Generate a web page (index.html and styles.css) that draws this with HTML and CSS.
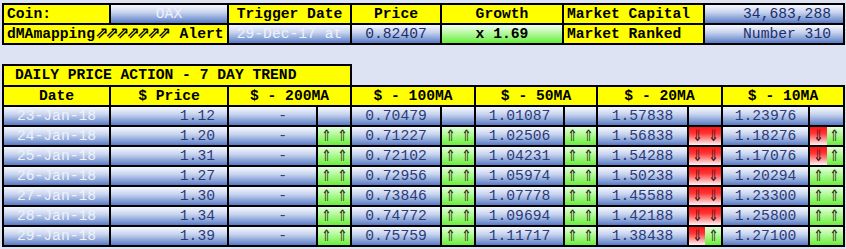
FILE: index.html
```html
<!DOCTYPE html>
<html>
<head>
<meta charset="utf-8">
<title>dMAmapping Alert</title>
<link rel="stylesheet" href="styles.css">
</head>
<body>
<div class="page">
  <div class="grid top">
    <div class="c y b l">Coin:</div>
    <div class="c blue w">OAX</div>
    <div class="c y b">Trigger Date</div>
    <div class="c y b">Price</div>
    <div class="c y b">Growth</div>
    <div class="c y b l">Market Capital</div>
    <div class="c blue n r">34,683,288</div>
    <div class="c y b l s2">dMAmapping<span class="ne">⇗⇗⇗⇗⇗⇗⇗</span> Alert</div>
    <div class="c blue w">29-Dec-17 at</div>
    <div class="c blue n">0.82407</div>
    <div class="c green b">x 1.69</div>
    <div class="c y b l">Market Ranked</div>
    <div class="c blue n r">Number 310</div>
  </div>

  <div class="title">DAILY PRICE ACTION - 7 DAY TREND</div>

  <div class="grid trend">
    <div class="c y b">Date</div>
    <div class="c y b">$ Price</div>
    <div class="c y b s2">$ - 200MA</div>
    <div class="c y b s2">$ - 100MA</div>
    <div class="c y b s2">$ - 50MA</div>
    <div class="c y b s2">$ - 20MA</div>
    <div class="c y b s2">$ - 10MA</div>

    <div class="c blue w">23-Jan-18</div>
    <div class="c blue v r">1.12</div>
    <div class="c blue v dash">-</div>
    <div class="c blue"></div>
    <div class="c blue v">0.70479</div>
    <div class="c blue"></div>
    <div class="c blue v">1.01087</div>
    <div class="c blue"></div>
    <div class="c blue v">1.57838</div>
    <div class="c blue"></div>
    <div class="c blue v">1.23976</div>
    <div class="c blue"></div>

    <div class="c blue w">24-Jan-18</div>
    <div class="c blue v r">1.20</div>
    <div class="c blue v dash">-</div>
    <div class="sig"><span class="up"><i>⇑</i></span><span class="up"><i>⇑</i></span></div>
    <div class="c blue v">0.71227</div>
    <div class="sig"><span class="up"><i>⇑</i></span><span class="up"><i>⇑</i></span></div>
    <div class="c blue v">1.02506</div>
    <div class="sig"><span class="up"><i>⇑</i></span><span class="up"><i>⇑</i></span></div>
    <div class="c blue v">1.56838</div>
    <div class="sig"><span class="dn"><i>⇓</i></span><span class="dn"><i>⇓</i></span></div>
    <div class="c blue v">1.18276</div>
    <div class="sig"><span class="dn"><i>⇓</i></span><span class="up"><i>⇑</i></span></div>

    <div class="c blue w">25-Jan-18</div>
    <div class="c blue v r">1.31</div>
    <div class="c blue v dash">-</div>
    <div class="sig"><span class="up"><i>⇑</i></span><span class="up"><i>⇑</i></span></div>
    <div class="c blue v">0.72102</div>
    <div class="sig"><span class="up"><i>⇑</i></span><span class="up"><i>⇑</i></span></div>
    <div class="c blue v">1.04231</div>
    <div class="sig"><span class="up"><i>⇑</i></span><span class="up"><i>⇑</i></span></div>
    <div class="c blue v">1.54288</div>
    <div class="sig"><span class="dn"><i>⇓</i></span><span class="dn"><i>⇓</i></span></div>
    <div class="c blue v">1.17076</div>
    <div class="sig"><span class="dn"><i>⇓</i></span><span class="up"><i>⇑</i></span></div>

    <div class="c blue w">26-Jan-18</div>
    <div class="c blue v r">1.27</div>
    <div class="c blue v dash">-</div>
    <div class="sig"><span class="up"><i>⇑</i></span><span class="up"><i>⇑</i></span></div>
    <div class="c blue v">0.72956</div>
    <div class="sig"><span class="up"><i>⇑</i></span><span class="up"><i>⇑</i></span></div>
    <div class="c blue v">1.05974</div>
    <div class="sig"><span class="up"><i>⇑</i></span><span class="up"><i>⇑</i></span></div>
    <div class="c blue v">1.50238</div>
    <div class="sig"><span class="dn"><i>⇓</i></span><span class="dn"><i>⇓</i></span></div>
    <div class="c blue v">1.20294</div>
    <div class="sig"><span class="up"><i>⇑</i></span><span class="up"><i>⇑</i></span></div>

    <div class="c blue w">27-Jan-18</div>
    <div class="c blue v r">1.30</div>
    <div class="c blue v dash">-</div>
    <div class="sig"><span class="up"><i>⇑</i></span><span class="up"><i>⇑</i></span></div>
    <div class="c blue v">0.73846</div>
    <div class="sig"><span class="up"><i>⇑</i></span><span class="up"><i>⇑</i></span></div>
    <div class="c blue v">1.07778</div>
    <div class="sig"><span class="up"><i>⇑</i></span><span class="up"><i>⇑</i></span></div>
    <div class="c blue v">1.45588</div>
    <div class="sig"><span class="dn"><i>⇓</i></span><span class="dn"><i>⇓</i></span></div>
    <div class="c blue v">1.23300</div>
    <div class="sig"><span class="up"><i>⇑</i></span><span class="up"><i>⇑</i></span></div>

    <div class="c blue w">28-Jan-18</div>
    <div class="c blue v r">1.34</div>
    <div class="c blue v dash">-</div>
    <div class="sig"><span class="up"><i>⇑</i></span><span class="up"><i>⇑</i></span></div>
    <div class="c blue v">0.74772</div>
    <div class="sig"><span class="up"><i>⇑</i></span><span class="up"><i>⇑</i></span></div>
    <div class="c blue v">1.09694</div>
    <div class="sig"><span class="up"><i>⇑</i></span><span class="up"><i>⇑</i></span></div>
    <div class="c blue v">1.42188</div>
    <div class="sig"><span class="dn"><i>⇓</i></span><span class="dn"><i>⇓</i></span></div>
    <div class="c blue v">1.25800</div>
    <div class="sig"><span class="up"><i>⇑</i></span><span class="up"><i>⇑</i></span></div>

    <div class="c blue w">29-Jan-18</div>
    <div class="c blue v r">1.39</div>
    <div class="c blue v dash">-</div>
    <div class="sig"><span class="up"><i>⇑</i></span><span class="up"><i>⇑</i></span></div>
    <div class="c blue v">0.75759</div>
    <div class="sig"><span class="up"><i>⇑</i></span><span class="up"><i>⇑</i></span></div>
    <div class="c blue v">1.11717</div>
    <div class="sig"><span class="up"><i>⇑</i></span><span class="up"><i>⇑</i></span></div>
    <div class="c blue v">1.38438</div>
    <div class="sig"><span class="dn"><i>⇓</i></span><span class="up"><i>⇑</i></span></div>
    <div class="c blue v">1.27100</div>
    <div class="sig"><span class="up"><i>⇑</i></span><span class="up"><i>⇑</i></span></div>
  </div>
</div>
</body>
</html>
```

FILE: styles.css
```css
html, body {
  margin: 0;
  padding: 0;
  background: #dde3f3;
}

.page {
  padding: 3px 1px 0 2px;
  font-family: "Liberation Mono", "Courier New", monospace;
  font-size: 14.67px;
  color: #000;
}

.grid {
  display: grid;
  box-sizing: border-box;
  width: 843px;
  padding: 2px;
  gap: 2px;
  background: #000;
  grid-auto-rows: 18px;
}

.top {
  grid-template-columns: 105px 116px 121px 88px 120px 139px 138px;
}

.trend {
  grid-template-columns: 105px 116px 87px 32px 88px 32px 87px 31px 89px 32px 85px 33px;
}

.title {
  box-sizing: border-box;
  width: 350px;
  height: 21px;
  margin-top: 19px;
  padding-left: 11px;
  border: 2px solid #000;
  border-bottom: 0;
  background: #ffff00;
  font-weight: bold;
  line-height: 19px;
  white-space: nowrap;
}

.c {
  line-height: 18px;
  text-align: center;
  white-space: nowrap;
}

.s2 { grid-column: span 2; }

.y { background: #ffff00; }
.b { font-weight: bold; }
.l { text-align: left; padding-left: 3px; }
.r { text-align: right; padding-right: 12px; }

.blue {
  background: linear-gradient(to bottom, #f6f8fe 0%, #c9d5ef 40%, #5a7cc6 100%);
}
.green {
  background: linear-gradient(to bottom, #f2fff0 0%, #b6f8a0 45%, #66ee3a 100%);
}

.w { color: #eef2fb; }
.n { color: #1c2d6b; }
.v { color: #2a3b78; }
.dash { text-align: right; padding-right: 29px; }

.ne {
  font-family: "DejaVu Sans", sans-serif;
  font-size: 16px;
  font-weight: bold;
  letter-spacing: -3px;
  padding-right: 3px;
  line-height: 1;
}

.sig {
  display: flex;
}
.sig span {
  flex: 1;
  display: flex;
  align-items: center;
  justify-content: center;
  color: #27300a;
}
.sig i {
  display: block;
  font-style: normal;
  font-family: "DejaVu Sans", sans-serif;
  font-size: 15px;
  line-height: 18px;
  transform: scale(0.8, 1.05);
}
.sig .up {
  background: linear-gradient(to bottom, #e6ffe0 0%, #a8f88a 50%, #6aee3c 100%);
}
.sig .dn {
  color: #3a1414;
  background: linear-gradient(to bottom, #ff1414 0%, #ff3434 35%, #fff4f4 100%);
}
```
